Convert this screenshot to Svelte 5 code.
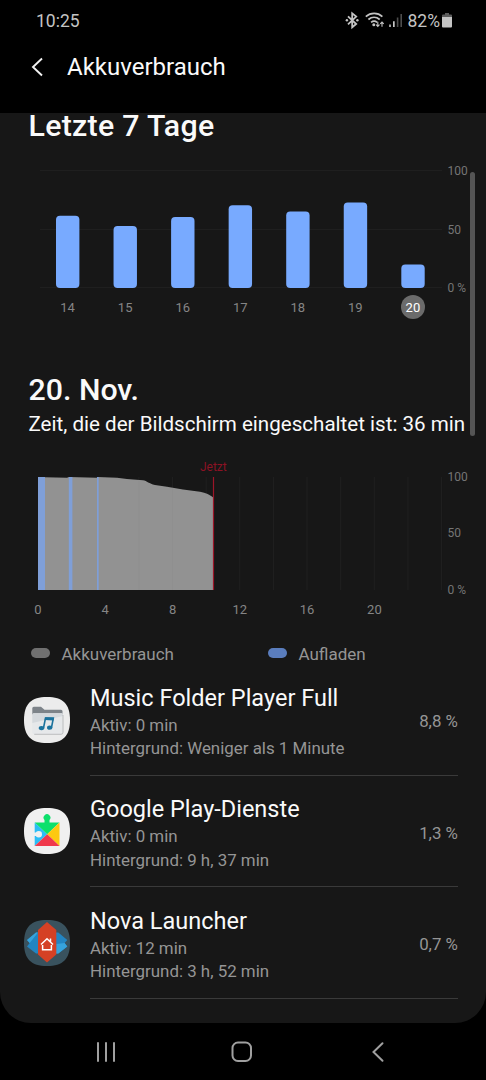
<script>
  const days = [
    { label: '14', top: 215.7 },
    { label: '15', top: 226 },
    { label: '16', top: 217 },
    { label: '17', top: 205.2 },
    { label: '18', top: 211.4 },
    { label: '19', top: 202.6 },
    { label: '20', top: 264.4 }
  ];
  const step = 57.55;
  const gridX = Array.from({ length: 12 }, (_, i) => 38 + (i + 1) * 33.63);
  const hours = [0, 4, 8, 12, 16, 20];
  const apps = [
    { icon: 'music', name: 'Music Folder Player Full', active: 'Aktiv: 0 min', background: 'Hintergrund: Weniger als 1 Minute', share: '8,8 %' },
    { icon: 'play', name: 'Google Play-Dienste', active: 'Aktiv: 0 min', background: 'Hintergrund: 9 h, 37 min', share: '1,3 %' },
    { icon: 'nova', name: 'Nova Launcher', active: 'Aktiv: 12 min', background: 'Hintergrund: 3 h, 52 min', share: '0,7 %' }
  ];
  const squircle = 'M23 0C39 0 46 7 46 23S39 46 23 46 0 39 0 23 7 0 23 0Z';
</script>

<div class="screen">
  <header>
    <div class="status">
      <span class="time">10:25</span>
      <svg class="signals" width="62" height="20" viewBox="342 11 62 20">
        <g fill="none" stroke="#c4c4c4" stroke-width="1.5">
          <path d="M347 16.3l8.2 7.700-4 3.300V13.400l4 3.200-8.200 7.700" stroke-width="1.800" />
          <path d="M364.8 16.6c4.9-4.3 11.8-4.3 16.6 0M367.4 19.5c3.4-3 7.9-3 11.3 0M370.1 22.3c1.9-1.6 4.1-1.6 6 0" stroke-width="1.7" />
          <path d="M376.8 21.8v4.4M375.1 24.6l1.7 1.8 1.7-1.8M381 26.7v-4.4M379.3 23.9l1.7-1.8 1.7 1.8" stroke-width="1.1" />
        </g>
        <circle cx="345.9" cy="20.3" r="1.2" fill="#c4c4c4" />
        <circle cx="356.4" cy="20.3" r="1.2" fill="#c4c4c4" />
        <circle cx="372.8" cy="24.7" r="1.5" fill="#c4c4c4" />
        <path d="M388.2 24.5h1.6V27h-1.6zM392 21.2h1.7V27H392z" fill="#c4c4c4" />
        <path d="M395.8 17.5h1.6V27h-1.6zM399.4 14h1.6v13h-1.6z" fill="#4d4d4d" />
      </svg>
      <span class="percent">82%</span>
      <svg class="battery" width="10" height="15" viewBox="0 0 10 15">
        <path d="M3 0h4v1.5h2a1 1 0 0 1 1 1V5H0V2.500a1 1 0 0 1 1-1h2z" fill="#5c5c5c" />
        <path d="M0 4h10v9.500a1 1 0 0 1-1 1H1a1 1 0 0 1-1-1z" fill="#c4c4c4" />
      </svg>
    </div>
    <div class="titlebar">
      <svg width="12" height="20" viewBox="0 0 12 20"><path d="M11 1.500L2 10l9 8.500" fill="none" stroke="#f2f2f2" stroke-width="1.900" /></svg>
      <span>Akkuverbrauch</span>
    </div>
  </header>

  <main>
    <h1>Letzte 7 Tage</h1>
    <svg class="chart" width="486" height="191" viewBox="0 139 486 191">
      <path d="M40 170.500H442M40 229.500H442M40 287.500H442" stroke="#1f1f1f" />
      {#each days as day, i}
        <rect x={56 + i * step} y={day.top} width="23.400" height={288 - day.top} rx="4" fill="#78aaff" />
        {#if i === 6}
          <circle cx="413" cy="307" r="12" fill="#6b6b6b" />
        {/if}
        <text class:today={i === 6} class="tick" x={67.6 + i * step} y="312" text-anchor="middle">{day.label}</text>
      {/each}
      <g class="scale">
        <text x="447.500" y="175">100</text>
        <text x="447.500" y="233.500">50</text>
        <text x="447.500" y="291.500">0 %</text>
      </g>
    </svg>

    <h2>20. Nov.</h2>
    <p class="screen-time">Zeit, die der Bildschirm eingeschaltet ist: 36 min</p>

    <svg class="chart" width="486" height="183" viewBox="0 437 486 183">
      {#each gridX as x}
        <path d="M{x} 477V590" stroke="#202020" />
      {/each}
      <path d="M38 477L45 477.300 67 477.700 69 477 96.700 477.700 97.400 477 117 477.700 127 479 143 480.300C147 481 149 483.700 155 485L167 486.800 183 489.400 200 491.700C206 492.800 210 495 213.400 497.500V590H38Z" fill="#929292" />
      <path d="M138.900 480.500V590M172.500 488V590" stroke="#8f8f8f" />
      <g fill="#7f9fd8">
        <rect x="38" y="477" width="7" height="113" />
        <rect x="68.800" y="477" width="3.600" height="113" />
        <rect x="97" y="477" width="1.700" height="113" />
      </g>
      <path d="M213.500 477V590" stroke="#9c1528" stroke-width="1.200" />
      <text class="now" x="213.300" y="471" text-anchor="middle">Jetzt</text>
      {#each hours as hour}
        <text class="tick" x={38 + hour * 16.82} y="613.500" text-anchor="middle">{hour}</text>
      {/each}
      <g class="scale">
        <text x="447.500" y="481">100</text>
        <text x="447.500" y="537">50</text>
        <text x="447.500" y="593.500">0 %</text>
      </g>
    </svg>

    <div class="legend">
      <div><i class="usage"></i>Akkuverbrauch</div>
      <div><i class="charging"></i>Aufladen</div>
    </div>

    <ul>
      {#each apps as app}
        <li>
          <svg class="icon" width="46" height="46" viewBox="0 0 46 46">
            {#if app.icon === 'music'}
              <path d={squircle} fill="#ececec" />
              <path d="M8.300 18v-6.800a1.500 1.500 0 0 1 1.500-1.500h7.200l3.500 3H37a1.500 1.500 0 0 1 1.500 1.500V18z" fill="#7d8389" />
              <path d="M9.800 16.300H37.500a1.500 1.500 0 0 1 1.500 1.500v17.500a2 2 0 0 1-2 2H10.300a2 2 0 0 1-2-2V17.800a1.500 1.500 0 0 1 1.500-1.500z" fill="#e6e8ea" />
              <path d="M8.300 26L39 19v-1.200a1.500 1.500 0 0 0-1.500-1.500H9.800a1.500 1.500 0 0 0-1.500 1.500z" fill="#d5d9dd" />
              <path d="M39 18v17.300a2 2 0 0 1-2 2H10.300" fill="none" stroke="#b0b2b4" stroke-width=".8" />
              <path d="M19.500 31l2-10 7.800.3-1.800 9.200" fill="none" stroke="#1b729d" stroke-width="1.600" />
              <path d="M21.200 20.200l8.900.3-.6 2.900-8.800-.3z" fill="#1b729d" />
              <ellipse cx="17.500" cy="31.100" rx="2.800" ry="2.100" fill="#1b729d" />
              <ellipse cx="25.700" cy="30.700" rx="2.700" ry="2.100" fill="#1b729d" />
            {:else if app.icon === 'play'}
              <path d={squircle} fill="#f0f0f0" />
              <path d="M10.700 14.500L23.200 26.300 10.700 38z" fill="#2bbdf5" />
              <circle cx="14.800" cy="26.200" r="3.200" fill="#f0f0f0" />
              <path d="M10 24.500h3v3.500h-3z" fill="#f0f0f0" />
              <path d="M10.700 14.500h9.800V12a3.400 3.400 0 1 1 5 0v2.500h10L23.200 26.300z" fill="#0ce06b" />
              <path d="M35.500 14.500V38L23.200 26.300z" fill="#fdc910" />
              <path d="M10.700 38L23.200 26.300 35.500 38z" fill="#f0384b" />
            {:else}
              <path d={squircle} fill="#39525e" />
              <path d="M14 12.500h-2L3 20l2.700 3L3 26.500l9 7h2zM32 12.500h2.300l9 7.500-2.700 3 2.700 3.500-9 7H32z" fill="#2385c2" />
              <path d="M14 12.500h-2L3 20l2.700 3zM32.300 24l8.300-1 2.700 3.500-9 7H32z" fill="#36a3dc" />
              <path d="M23 2l9.300 8v24.500L23 42.500l-9-8V10z" fill="#d54125" />
              <path d="M17 24.500l6-5.700 6 5.700M18.600 25v4.700h8.800V25M26.500 18.500v3" fill="none" stroke="#fff" stroke-width="1.500" />
            {/if}
          </svg>
          <div class="entry">
            <div class="info">
              <div class="name">{app.name}</div>
              <div class="detail">{app.active}</div>
              <div class="detail">{app.background}</div>
            </div>
            <div class="share">{app.share}</div>
          </div>
        </li>
      {/each}
    </ul>
    <div class="scrollbar"></div>
  </main>

  <nav>
    <svg width="486" height="57" viewBox="0 1023 486 57" fill="none" stroke="#a0a0a0" stroke-width="2" stroke-linecap="round">
      <path d="M98 1043v18M106 1043v18M114 1043v18" />
      <rect x="232.500" y="1042.500" width="18.500" height="18.500" rx="5.500" />
      <path d="M382.500 1043.300l-9 8.700 9 8.700" />
    </svg>
  </nav>
</div>

<style>
  :global(body) { background: #000; }
  .screen {
    width: 486px;
    height: 1080px;
    overflow: hidden;
    background: #000;
    font-family: Roboto, sans-serif;
    color: #fafafa;
    display: flex;
    flex-direction: column;
  }
  header { height: 113px; }
  svg { display: block; flex: none; }
  .status {
    height: 42px;
    padding: 0 34px 0 36px;
    display: flex;
    align-items: center;
    box-sizing: border-box;
    font-size: 17.500px;
    color: #c4c4c4;
  }
  .time { flex: 1; }
  .percent { margin: 0 2px 0 3px; }
  .battery { margin-bottom: 2px; }
  .titlebar {
    height: 50px;
    padding-left: 31px;
    display: flex;
    align-items: center;
    gap: 24px;
    font-size: 24px;
  }
  main {
    position: relative;
    height: 910px;
    background: #171717;
    border-radius: 0 0 31px 31px;
  }
  h1, h2 { margin: 0; padding-left: 28.500px; font-size: 30.300px; font-weight: 500; }
  h1 { line-height: 26px; letter-spacing: 0.300px; }
  h2 { margin-top: 44px; line-height: 32px; }
  .screen-time {
    margin: 5px 0 0;
    padding-left: 28.500px;
    line-height: 26px;
    font-size: 20.580px;
    white-space: nowrap;
  }
  .tick { font-size: 13px; fill: #858585; }
  .tick.today { fill: #fff; }
  .scale { font-size: 12px; fill: #757575; }
  .now { font-size: 12px; fill: #8c1224; }
  .legend {
    display: grid;
    grid-template-columns: 237px 1fr;
    margin-top: 24px;
    padding-left: 30.500px;
    height: 20px;
    font-size: 17px;
    color: #959595;
  }
  .legend div { display: flex; align-items: center; gap: 12px; }
  .legend i { width: 19px; height: 10px; border-radius: 5px; margin-top: -2px; }
  .usage { background: #707070; }
  .charging { background: #5a7dbd; }
  ul { list-style: none; margin: 0; padding: 0 28px 0 24px; }
  li { display: flex; align-items: center; gap: 20px; height: 111.600px; }
  .entry {
    flex: 1;
    height: 100%;
    box-sizing: border-box;
    border-bottom: 1px solid #3a3a3a;
    display: flex;
    align-items: center;
    justify-content: space-between;
  }
  .info { padding-top: 5px; }
  .name { font-size: 23.500px; line-height: 31px; }
  .detail { font-size: 16.900px; line-height: 23.500px; color: #959595; }
  .share { font-size: 16.900px; color: #959595; padding-top: 4px; }
  .scrollbar {
    position: absolute;
    left: 469.500px;
    top: 59px;
    width: 5px;
    height: 264px;
    border-radius: 3px;
    background: #555;
  }
  nav { height: 57px; }
</style>
